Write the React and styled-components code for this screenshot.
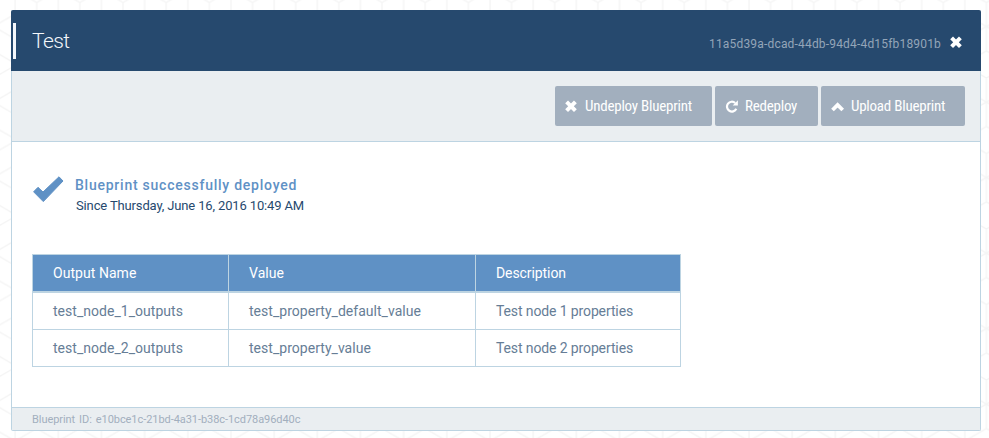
import React from "react";
import styled, { createGlobalStyle } from "styled-components";

const Global = createGlobalStyle`
  * { box-sizing: border-box; }
  body { margin: 0; background: #fff; font-family: Roboto, sans-serif; }
`;
const Page = styled.div`
  position: relative; height: 438px; overflow: hidden; padding: 10px 8px 7px 11px;
`;
const Backdrop = styled.svg`
  position: absolute; inset: 0; width: 100%; height: 100%;
`;
const Panel = styled.section`
  position: relative; height: 421px; display: flex; flex-direction: column;
  border: 1px solid #bdd4e2; border-top: 0; border-radius: 2px; background: #fff;
`;
const Header = styled.header`
  height: 61px; margin: 0 -1px; padding: 0 18px 0 2px; display: flex; align-items: center;
  background: #26496e; border-radius: 2px 2px 0 0;
`;
const Accent = styled.div`width: 3px; height: 36px; background: #f4f7fb;`;
const Title = styled.h1`
  margin: 0 auto 0 16px; font: 300 21px/24px Roboto, sans-serif; letter-spacing: -0.6px; color: #f4f7fb;
`;
const DeploymentId = styled.span`
  margin: 6px 9px 0 0; font-size: 12px; letter-spacing: 0.18px; color: #94a5b8;
`;
const CloseButton = styled.button`
  border: 0; padding: 0; margin-top: 4px; background: none; color: #fff; display: flex;
`;
const Toolbar = styled.div`
  height: 71px; padding: 15px 15px 0 0; display: flex; justify-content: flex-end; gap: 3px;
  background: #eaeef1; border-bottom: 1px solid #bdd4e2;
`;
const Action = styled.button`
  width: ${(p) => p.$width}px; height: 40px; border: 0; border-radius: 2px; padding: 0 0 0 10px;
  display: flex; align-items: center; background: #a2afbe; color: #fff;
`;
const ActionIcon = styled.span`width: 20px; display: flex;`;
const ActionLabel = styled.span`
  font: 400 15px "Roboto Condensed", Roboto, sans-serif; font-stretch: 75%; white-space: nowrap;
  letter-spacing: -0.23px;
`;
const Content = styled.main`flex: 1; padding: 33px 20px 0;`;
const Status = styled.div`display: flex; height: 79px;`;
const StatusIcon = styled.div`width: 43px; padding: 1px 0 0 1px; color: #5f91c5;`;
const StatusTitle = styled.div`
  font: 500 14px/20px Roboto, sans-serif; letter-spacing: 0.76px; color: #5f91c5;
`;
const StatusDate = styled.div`
  margin-left: 1px; font-size: 13px; line-height: 21px; letter-spacing: -0.14px; color: #26496e;
`;
const Table = styled.table`
  width: 649px; table-layout: fixed; border-collapse: collapse; font-size: 14px; color: #667d96;
`;
const HeadCell = styled.th`
  height: 37px; width: ${(p) => p.$width}px; padding: 0 20px; text-align: left; font-weight: 400;
  letter-spacing: 0.05px; background: #5f91c5; color: #fff;
  border: 1px solid #bdd4e2; border-bottom-width: 2px;
  &:last-child { letter-spacing: -0.08px; }
`;
const Row = styled.tr`height: ${(p) => p.$height}px;`;
const Cell = styled.td`
  padding: 0 20px; border: 1px solid #bdd4e2; letter-spacing: 0.03px;
  &:last-child { letter-spacing: -0.12px; }
`;
const Footer = styled.footer`
  height: 23px; padding-left: 20px; border-top: 1px solid #bdd4e2; background: #eaeef1;
  font-size: 11px; line-height: 23px; letter-spacing: -0.06px; word-spacing: 1.3px; color: #a2afbe;
`;

const CrossIcon = () => (
  <svg width="13" height="13" viewBox="0 0 13 13" fill="none" stroke="currentColor" strokeWidth="4">
    <path d="M1.6 1.8 10.4 10.6M10.4 1.8 1.6 10.6" />
  </svg>
);
const RepeatIcon = () => (
  <svg width="14" height="14" viewBox="0 0 14 14" fill="none">
    <path d="M10.2 4A4.9 4.9 0 1 0 11.3 9.8" stroke="currentColor" strokeWidth="2.2" />
    <path d="M12.9 1.2V6.4H7.7Z" fill="currentColor" />
  </svg>
);
const ChevronIcon = () => (
  <svg width="14" height="11" viewBox="0 0 14 11" fill="none" stroke="currentColor" strokeWidth="3.8">
    <path d="M1.5 9 6.6 4 11.7 9" />
  </svg>
);
const CheckIcon = () => (
  <svg width="31" height="27" viewBox="0 0 31 27" fill="currentColor" stroke="currentColor" strokeLinejoin="round">
    <path d="M.6 15.8 5 11.3 10 16 26 .8 30 5 10.3 25.6Z" />
  </svg>
);
const HexBackdrop = () => (
  <Backdrop>
    <defs>
      <pattern id="hex" x="-6.5" y="2.5" width="43.17" height="75.5" patternUnits="userSpaceOnUse">
        <g fill="none" stroke="#f4f4f4" strokeWidth="1.3">
          <path d="M21.6 0V75.5M0 0V48.5M43.17 0V48.5" />
          <path d="M0 24 21.6 11.5 43.17 24M0 24 21.6 36.5 43.17 24M0 48.5 21.6 61 43.17 48.5" />
          <path d="M0 75.5 21.6 63 43.17 75.5M0 0 21.6-12.5M0 0-4-2.3M43.17 0 47-2.3" />
        </g>
      </pattern>
    </defs>
    <rect width="100%" height="100%" fill="url(#hex)" />
  </Backdrop>
);

const rows = [
  ["test_node_1_outputs", "test_property_default_value", "Test node 1 properties"],
  ["test_node_2_outputs", "test_property_value", "Test node 2 properties"],
];

export default function App() {
  return (
    <Page>
      <Global />
      <HexBackdrop />
      <Panel>
        <Header>
          <Accent />
          <Title>Test</Title>
          <DeploymentId>11a5d39a-dcad-44db-94d4-4d15fb18901b</DeploymentId>
          <CloseButton aria-label="Close"><CrossIcon /></CloseButton>
        </Header>
        <Toolbar>
          <Action $width={157}><ActionIcon><CrossIcon /></ActionIcon><ActionLabel>Undeploy Blueprint</ActionLabel></Action>
          <Action $width={103}><ActionIcon><RepeatIcon /></ActionIcon><ActionLabel>Redeploy</ActionLabel></Action>
          <Action $width={144}><ActionIcon><ChevronIcon /></ActionIcon><ActionLabel>Upload Blueprint</ActionLabel></Action>
        </Toolbar>
        <Content>
          <Status>
            <StatusIcon><CheckIcon /></StatusIcon>
            <div>
              <StatusTitle>Blueprint successfully deployed</StatusTitle>
              <StatusDate>Since Thursday, June 16, 2016 10:49 AM</StatusDate>
            </div>
          </Status>
          <Table>
            <thead><tr><HeadCell $width={196}>Output Name</HeadCell><HeadCell $width={247}>Value</HeadCell><HeadCell $width={205}>Description</HeadCell></tr></thead>
            <tbody>
              {rows.map((r, i) => (
                <Row key={r[0]} $height={i === 0 ? 38 : 37}>{r.map((c) => <Cell key={c}>{c}</Cell>)}</Row>
              ))}
            </tbody>
          </Table>
        </Content>
        <Footer>Blueprint ID: e10bce1c-21bd-4a31-b38c-1cd78a96d40c</Footer>
      </Panel>
    </Page>
  );
}
